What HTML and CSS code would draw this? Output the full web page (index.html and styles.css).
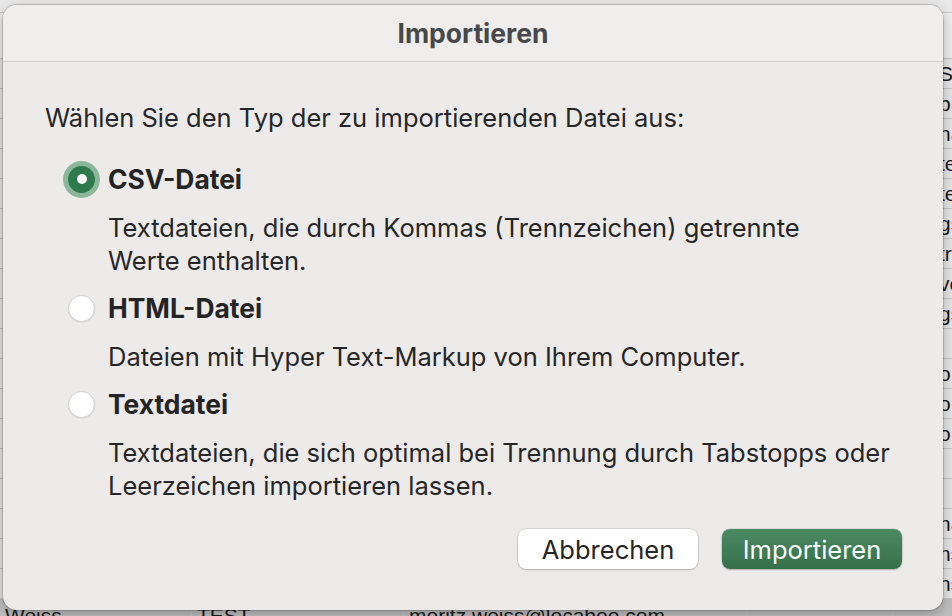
FILE: index.html
```html
<!DOCTYPE html>
<html lang="de">
<head>
<meta charset="utf-8">
<title>Importieren</title>
<link rel="stylesheet" href="styles.css">
</head>
<body>
<div class="sheet">
  <div class="sheet-top"></div>
  <div class="sheet-head"></div>
  <div class="row"><span class="c1"></span><span class="c2"></span><span class="c3"></span><span class="c4"></span><span class="c5">Se</span></div>
  <div class="row"><span class="c1"></span><span class="c2"></span><span class="c3"></span><span class="c4"></span><span class="c5">bi</span></div>
  <div class="row"><span class="c1"></span><span class="c2"></span><span class="c3"></span><span class="c4"></span><span class="c5">na</span></div>
  <div class="row"><span class="c1"></span><span class="c2"></span><span class="c3"></span><span class="c4"></span><span class="c5">te</span></div>
  <div class="row"><span class="c1"></span><span class="c2"></span><span class="c3"></span><span class="c4"></span><span class="c5">te</span></div>
  <div class="row"><span class="c1"></span><span class="c2"></span><span class="c3"></span><span class="c4"></span><span class="c5">gs</span></div>
  <div class="row"><span class="c1"></span><span class="c2"></span><span class="c3"></span><span class="c4"></span><span class="c5">tr</span></div>
  <div class="row"><span class="c1"></span><span class="c2"></span><span class="c3"></span><span class="c4"></span><span class="c5">ve</span></div>
  <div class="row"><span class="c1"></span><span class="c2"></span><span class="c3"></span><span class="c4"></span><span class="c5">gs</span></div>
  <div class="row"><span class="c1"></span><span class="c2"></span><span class="c3"></span><span class="c4"></span><span class="c5"></span></div>
  <div class="row"><span class="c1"></span><span class="c2"></span><span class="c3"></span><span class="c4"></span><span class="c5">o</span></div>
  <div class="row"><span class="c1"></span><span class="c2"></span><span class="c3"></span><span class="c4"></span><span class="c5">o</span></div>
  <div class="row"><span class="c1"></span><span class="c2"></span><span class="c3"></span><span class="c4"></span><span class="c5">o</span></div>
  <div class="row"><span class="c1"></span><span class="c2"></span><span class="c3"></span><span class="c4"></span><span class="c5"></span></div>
  <div class="row"><span class="c1"></span><span class="c2"></span><span class="c3"></span><span class="c4"></span><span class="c5"></span></div>
  <div class="row"><span class="c1"></span><span class="c2"></span><span class="c3"></span><span class="c4"></span><span class="c5">na</span></div>
  <div class="row"><span class="c1"></span><span class="c2"></span><span class="c3"></span><span class="c4"></span><span class="c5">ns</span></div>
  <div class="row"><span class="c1"></span><span class="c2"></span><span class="c3"></span><span class="c4"></span><span class="c5">ns</span></div>
  <div class="row row-sel"><span class="c1">Weiss</span><span class="c2">TEST</span><span class="c3">moritz.weiss@locaboo.com</span><span class="c4"></span><span class="c5"></span></div>
</div>

<div class="dialog">
  <div class="dialog-title">Importieren</div>
  <div class="dialog-body">
    <p class="prompt">Wählen Sie den Typ der zu importierenden Datei aus:</p>

    <div class="option">
      <span class="radio radio-on"><span class="radio-dot"></span></span>
      <span class="option-name">CSV-Datei</span>
    </div>
    <p class="desc">Textdateien, die durch Kommas (Trennzeichen) getrennte<br>Werte enthalten.</p>

    <div class="option">
      <span class="radio"></span>
      <span class="option-name">HTML-Datei</span>
    </div>
    <p class="desc">Dateien mit Hyper Text-Markup von Ihrem Computer.</p>

    <div class="option">
      <span class="radio"></span>
      <span class="option-name">Textdatei</span>
    </div>
    <p class="desc">Textdateien, die sich optimal bei Trennung durch Tabstopps oder<br>Leerzeichen importieren lassen.</p>

    <div class="buttons">
      <button class="btn btn-cancel">Abbrechen</button>
      <button class="btn btn-primary">Importieren</button>
    </div>
  </div>
</div>
</body>
</html>
```

FILE: styles.css
```css
html, body {
  margin: 0;
  padding: 0;
  width: 952px;
  height: 616px;
  overflow: hidden;
}

body {
  position: relative;
  background: #e3e3e3;
  font-family: Inter, "Noto Sans", "Liberation Sans", sans-serif;
  color: #262626;
}

/* Spreadsheet behind the dialog */
.sheet {
  display: flex;
  flex-direction: column;
  font-family: "Liberation Sans", Arial, sans-serif;
  font-size: 21px;
  color: #1a1a1a;
}

.sheet-top {
  height: 12px;
  background: #e9e9e9;
  border-bottom: 1px solid #c9c9c9;
}

.sheet-head {
  height: 45px;
  background: #ececec;
  border-bottom: 1px solid #bdbdbd;
}

.row {
  display: flex;
  height: 29px;
  border-bottom: 1px solid #c3c3c3;
  background: #e4e4e4;
}

.row span {
  display: block;
  box-sizing: border-box;
  overflow: hidden;
  white-space: nowrap;
  line-height: 29px;
  padding-left: 5px;
  border-right: 1px solid #c3c3c3;
}

.c1 { width: 192px; }
.c2 { width: 212px; }
.c3 { width: 343px; }
.c4 { width: 146px; }
.c5 { flex: 1; padding-left: 46px !important; border-right: none !important; }

.row-sel {
  background: #bdbdbd;
  height: 40px;
}

.row-sel span {
  line-height: 34px;
}

/* Dialog */
.dialog {
  position: absolute;
  left: 3px;
  top: 5px;
  width: 940px;
  height: 605px;
  box-sizing: border-box;
  background: #ecebe9;
  border-radius: 14px;
  box-shadow: 0 0 0 1px rgba(0, 0, 0, 0.14), 0 3px 12px rgba(0, 0, 0, 0.28);
  overflow: hidden;
  display: flex;
  flex-direction: column;
}

.dialog-title {
  height: 56px;
  flex: none;
  background: #efeeed;
  border-bottom: 1px solid #cfcecd;
  text-align: center;
  font-weight: 700;
  font-size: 26.5px;
  line-height: 56px;
  color: #484848;
}

.dialog-body {
  padding: 41px 41px 0 42px;
  display: flex;
  flex-direction: column;
}

.prompt {
  margin: 0;
  font-size: 25.5px;
  line-height: 30px;
}

.option {
  display: flex;
  align-items: center;
  height: 40px;
  margin-top: 11px;
}

.prompt + .option {
  margin-top: 26px;
}

.radio {
  flex: none;
  box-sizing: border-box;
  width: 27px;
  height: 27px;
  margin-left: 23px;
  margin-right: 13px;
  border-radius: 50%;
  background: #ffffff;
  border: 1px solid #d2d2d2;
  box-shadow: 0 0.5px 1px rgba(0, 0, 0, 0.12);
  display: flex;
  align-items: center;
  justify-content: center;
}

.radio-on {
  background: #2f7a4c;
  border: none;
  box-shadow: 0 0 0 5px #8db79a;
}

.radio-dot {
  width: 10px;
  height: 10px;
  border-radius: 50%;
  background: #ffffff;
}

.option-name {
  font-weight: 700;
  font-size: 26.4px;
  color: #242424;
}

.desc {
  margin: 12px 0 0 63px;
  font-size: 25.5px;
  line-height: 33px;
}

.buttons {
  display: flex;
  justify-content: flex-end;
  gap: 24px;
  margin-top: 27px;
}

.btn {
  width: 180px;
  height: 40px;
  border-radius: 8px;
  font-family: Inter, "Noto Sans", "Liberation Sans", sans-serif;
  font-size: 25.5px;
  padding: 0;
  cursor: default;
}

.btn-cancel {
  background: #ffffff;
  color: #262626;
  border: none;
  box-shadow: 0 0 0 0.5px rgba(0, 0, 0, 0.18), 0 1px 2px rgba(0, 0, 0, 0.18);
}

.btn-primary {
  background: linear-gradient(#4b8a63, #36704a);
  color: #ffffff;
  border: none;
  box-shadow: 0 0 0 0.5px rgba(0, 0, 0, 0.15), 0 1px 2px rgba(0, 0, 0, 0.2);
}
```
